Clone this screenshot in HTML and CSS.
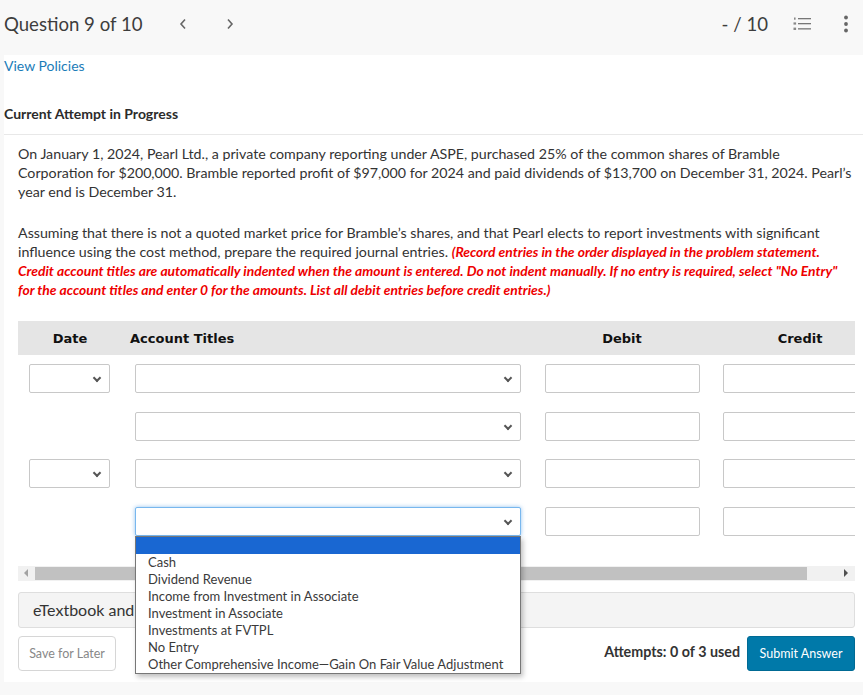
FILE: index.html
```html
<!DOCTYPE html>
<html>
<head>
<meta charset="utf-8">
<link rel="stylesheet" href="styles.css">
</head>
<body>
<header class="topbar">
  <div class="qtitle">Question 9 of 10</div>
  <button class="nav prev" aria-label="Previous">
    <svg width="8" height="12" viewBox="0 0 8 12"><polyline points="6,1.5 2,6 6,10.5" fill="none" stroke="#666" stroke-width="1.6"/></svg>
  </button>
  <button class="nav next" aria-label="Next">
    <svg width="8" height="12" viewBox="0 0 8 12"><polyline points="2,1.5 6,6 2,10.5" fill="none" stroke="#666" stroke-width="1.6"/></svg>
  </button>
  <div class="spacer"></div>
  <div class="score">- / 10</div>
  <button class="icon-btn list" aria-label="Question list">
    <svg width="18" height="14" viewBox="0 0 18 14">
      <rect x="1" y="0.5" width="1.6" height="2.2" fill="#888"/>
      <rect x="0.5" y="5.4" width="2.6" height="2.2" fill="#888"/>
      <rect x="0.5" y="10.6" width="2.6" height="2.4" fill="#888"/>
      <rect x="5" y="1" width="13" height="1.3" fill="#777"/>
      <rect x="5" y="6" width="13" height="1.3" fill="#777"/>
      <rect x="5" y="11.2" width="13" height="1.3" fill="#777"/>
    </svg>
  </button>
  <button class="icon-btn kebab" aria-label="More">
    <svg width="6" height="18" viewBox="0 0 6 18"><circle cx="3" cy="2.5" r="1.9" fill="#666"/><circle cx="3" cy="9" r="1.9" fill="#666"/><circle cx="3" cy="15.5" r="1.9" fill="#666"/></svg>
  </button>
</header>

<main class="main">
  <div class="policies"><a href="#">View Policies</a></div>
  <h2 class="attempt">Current Attempt in Progress</h2>

  <section class="question">
    <p class="para">On January 1, 2024, Pearl Ltd., a private company reporting under ASPE, purchased 25% of the common shares of Bramble Corporation for $200,000. Bramble reported profit of $97,000 for 2024 and paid dividends of $13,700 on December 31, 2024. Pearl’s year end is December 31.</p>
    <p class="para">Assuming that there is not a quoted market price for Bramble’s shares, and that Pearl elects to report investments with significant influence using the cost method, prepare the required journal entries. <em class="warn">(Record entries in the order displayed in the problem statement. Credit account titles are automatically indented when the amount is entered. Do not indent manually. If no entry is required, select "No Entry" for the account titles and enter 0 for the amounts. List all debit entries before credit entries.)</em></p>

    <div class="table-wrap">
      <div class="table">
        <div class="row head">
          <div class="c-date">Date</div>
          <div class="c-acct">Account Titles</div>
          <div class="c-num">Debit</div>
          <div class="c-num">Credit</div>
        </div>

        <div class="row">
          <div class="c-date"><div class="sel date-sel"><span class="chev"></span></div></div>
          <div class="c-acct"><div class="sel acct-sel"><span class="chev"></span></div></div>
          <div class="c-num"><div class="inp"></div></div>
          <div class="c-num"><div class="inp"></div></div>
        </div>

        <div class="row">
          <div class="c-date"></div>
          <div class="c-acct"><div class="sel acct-sel"><span class="chev"></span></div></div>
          <div class="c-num"><div class="inp"></div></div>
          <div class="c-num"><div class="inp"></div></div>
        </div>

        <div class="row">
          <div class="c-date"><div class="sel date-sel"><span class="chev"></span></div></div>
          <div class="c-acct"><div class="sel acct-sel"><span class="chev"></span></div></div>
          <div class="c-num"><div class="inp"></div></div>
          <div class="c-num"><div class="inp"></div></div>
        </div>

        <div class="row">
          <div class="c-date"></div>
          <div class="c-acct">
            <div class="sel acct-sel focus"><span class="chev"></span>
              <ul class="options">
                <li class="hl">&nbsp;</li>
                <li>Cash</li>
                <li>Dividend Revenue</li>
                <li>Income from Investment in Associate</li>
                <li>Investment in Associate</li>
                <li>Investments at FVTPL</li>
                <li>No Entry</li>
                <li>Other Comprehensive Income—Gain On Fair Value Adjustment</li>
              </ul>
            </div>
          </div>
          <div class="c-num"><div class="inp"></div></div>
          <div class="c-num"><div class="inp"></div></div>
        </div>
      </div>
    </div>

    <div class="hscroll">
      <span class="arr left"></span>
      <div class="track"><div class="thumb"></div></div>
      <span class="arr right"></span>
    </div>

    <div class="etext">eTextbook and Media</div>

    <div class="actions">
      <button class="save">Save for Later</button>
      <div class="spacer"></div>
      <span class="attempts">Attempts: 0 of 3 used</span>
      <button class="submit">Submit Answer</button>
    </div>
  </section>
</main>
</body>
</html>
```

FILE: styles.css
```css
* { box-sizing: border-box; }
html, body { margin: 0; padding: 0; }
body {
  background: #f8f8f8;
  font-family: Lato, "Open Sans", sans-serif;
  color: #333;
  width: 863px;
  height: 695px;
  overflow: hidden;
}
button { font-family: inherit; cursor: pointer; }

.topbar {
  height: 55px;
  display: flex;
  align-items: flex-start;
  padding: 12px 0 0 4px;
  background: #f8f8f8;
}
.qtitle {
  font-size: 18.6px;
  line-height: 24px;
  color: #3d3d3d;
}
.nav {
  border: 0;
  background: none;
  padding: 0;
  margin-top: 6px;
  height: 12px;
  display: flex;
}
.prev { margin-left: 36px; }
.next { margin-left: 39px; }
.spacer { flex: 1; }
.score {
  font-size: 18.6px;
  line-height: 24px;
  color: #3d3d3d;
  margin-right: 25px;
}
.icon-btn {
  border: 0;
  background: none;
  padding: 0;
  display: flex;
}
.list { margin-top: 5px; margin-right: 32px; }
.kebab { margin-top: 3px; margin-right: 14px; }

.main {
  margin-left: 4px;
  background: #fff;
  height: 627px;
}
.policies {
  padding-top: 2px;
  font-size: 14px;
  line-height: 18px;
}
.policies a { color: #1b7cb8; text-decoration: none; }
.attempt {
  margin: 30px 0 0;
  font-size: 14px;
  line-height: 18px;
  font-weight: 700;
  color: #2b2b2b;
  padding-bottom: 11px;
  border-bottom: 1px solid #e8e8e8;
}
.question { padding: 9px 8px 0 14px; }
.para {
  margin: 0 -1px 22px 0;
  font-size: 14.22px;
  line-height: 19px;
  color: #333;
}
.warn {
  color: #ee0000;
  font-weight: 700;
  font-style: italic;
  font-size: 13.85px;
}

.table-wrap {
  width: 837px;
  overflow-x: clip;
  overflow-y: visible;
}
.table { width: 900px; }
.row {
  display: flex;
  padding: 9px 0 9.67px;
}
.row.head {
  height: 34px;
  padding: 0;
  width: 837px;
  align-items: center;
  background: #e5e5e5;
  font-family: "DejaVu Sans", Verdana, sans-serif;
  font-weight: 700;
  font-size: 13px;
  color: #111;
}
.c-date { width: 104px; flex: none; }
.c-acct { width: 411px; flex: none; padding-left: 13px; position: relative; }
.c-num { width: 178px; flex: none; padding-left: 12px; }
.head .c-date { text-align: center; }
.head .c-acct { padding-left: 8px; }
.head .c-num { padding-left: 0; text-align: center; }

.sel, .inp {
  height: 29px;
  border: 1px solid #c8c8c8;
  border-radius: 2px;
  background: #fff;
}
.sel { position: relative; }
.date-sel { width: 81px; margin-left: 11px; }
.acct-sel { width: 386px; }
.inp { width: 155px; }
.chev {
  position: absolute;
  right: 9px;
  top: 10px;
  width: 6px;
  height: 6px;
  border-right: 2px solid #555;
  border-bottom: 2px solid #555;
  transform: rotate(45deg);
}
.sel.focus {
  border-color: #78b7ee;
  box-shadow: 0 0 4px rgba(102, 170, 233, 0.7);
}

.options {
  position: absolute;
  left: -1px;
  top: 28px;
  width: 386px;
  margin: 0;
  padding: 0;
  list-style: none;
  background: #fff;
  border: 1px solid #777;
  box-shadow: 2px 3px 5px rgba(0, 0, 0, 0.25);
  z-index: 10;
  font-size: 13px;
  color: #3a3a3a;
}
.options li {
  height: 17px;
  line-height: 17px;
  padding-left: 12px;
  white-space: nowrap;
}
.options li.hl { background: #1967d2; }

.hscroll {
  margin-top: 20px;
  width: 837px;
  height: 15px;
  background: #f1f1f1;
  display: flex;
  align-items: center;
}
.arr {
  width: 0; height: 0;
  border-top: 4px solid transparent;
  border-bottom: 4px solid transparent;
}
.arr.left { border-right: 4px solid #a3a3a3; margin: 0 0 0 6px; }
.arr.right { border-left: 4px solid #505050; margin: 0 7px 0 0; }
.track { flex: 1; height: 13px; padding-left: 7px; padding-right: 37px; }
.thumb { height: 13px; background: #c1c1c1; }

.etext {
  margin-top: 11px;
  width: 837px;
  height: 36px;
  background: #f4f4f4;
  border: 1px solid #dedede;
  border-radius: 3px;
  font-size: 16px;
  line-height: 34px;
  padding-left: 14px;
  color: #333;
}

.actions {
  margin-top: 8px;
  width: 837px;
  display: flex;
  align-items: center;
}
.save {
  width: 98px;
  height: 35px;
  background: #fff;
  border: 1px solid #d6d6d6;
  border-radius: 4px;
  color: #888;
  font-size: 12.5px;
  padding: 0;
}
.attempts {
  font-size: 14.3px;
  font-weight: 700;
  color: #333;
  margin-right: 7px;
  margin-top: -3px;
}
.submit {
  width: 108px;
  height: 35px;
  background: #0079a9;
  border: 1px solid #006a94;
  border-radius: 3px;
  color: #fff;
  font-size: 12.5px;
  padding: 0;
}
```
